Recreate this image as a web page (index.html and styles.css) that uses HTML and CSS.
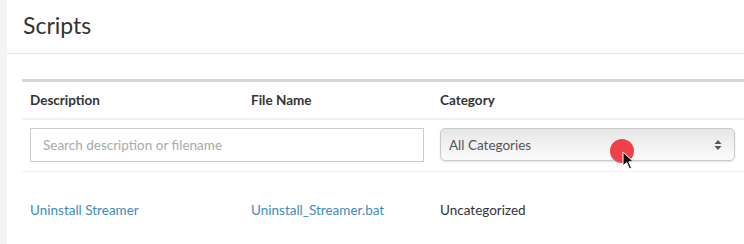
FILE: index.html
```html
<!DOCTYPE html>
<html lang="en">
<head>
    <meta charset="UTF-8">
    <meta name="viewport" content="width=device-width, initial-scale=1.0">
    <title>Scripts</title>
    <link rel="stylesheet" href="styles.css">
</head>
<body>
    <div class="panel">
        <div class="panel-header">
            <h1>Scripts</h1>
        </div>
        <div class="panel-body">
            <table class="scripts-table">
                <thead>
                    <tr class="head-row">
                        <th class="col-desc">Description</th>
                        <th class="col-file">File Name</th>
                        <th class="col-cat">Category</th>
                    </tr>
                    <tr class="filter-row">
                        <td colspan="2">
                            <input type="text" class="search" placeholder="Search description or filename">
                        </td>
                        <td>
                            <div class="select-wrap">
                                <span class="select-label">All Categories</span>
                                <svg class="select-arrows" width="8" height="12" viewBox="0 0 8 12">
                                    <path d="M4 1 L7.5 5 H0.5 Z" fill="#555"/>
                                    <path d="M4 11 L7.5 7 H0.5 Z" fill="#555"/>
                                </svg>
                            </div>
                        </td>
                    </tr>
                </thead>
                <tbody>
                    <tr class="data-row">
                        <td><a href="#">Uninstall Streamer</a></td>
                        <td><a href="#">Uninstall_Streamer.bat</a></td>
                        <td>Uncategorized</td>
                    </tr>
                </tbody>
            </table>
        </div>
    </div>

    <!-- click marker + mouse pointer from the recording -->
    <div class="click-dot"></div>
    <svg class="pointer" width="14" height="20" viewBox="0 0 14 20">
        <path d="M1 1 L1 15 L4.5 11.5 L7.5 18 L9.5 17 L6.8 10.8 L11.5 10.8 Z" fill="#111" stroke="#fff" stroke-width="1"/>
    </svg>
</body>
</html>
```

FILE: styles.css
```css
body {
    margin: 0;
    background-color: #f4f4f4;
    font-family: "Source Sans Pro", Lato, "Open Sans", sans-serif;
    color: #333;
    font-size: 13.5px;
    overflow: hidden;
}

.panel {
    margin-left: 7px;
    background-color: #fff;
    height: 244px;
}

.panel-header {
    height: 54px;
    border-bottom: 1px solid #e6e6e6;
    box-sizing: border-box;
    padding: 9px 16px 0;
}

h1 {
    margin: 0;
    font-size: 23px;
    font-weight: 400;
    color: #333;
    line-height: 32px;
}

.panel-body {
    padding: 25px 0 0 15px;
}

.scripts-table {
    width: 724px;
    border-collapse: collapse;
    border-top: 3px solid #d2d6de;
}

.scripts-table th,
.scripts-table td {
    text-align: left;
    padding: 0 8px;
}

.head-row th {
    height: 36px;
    font-weight: 700;
    font-size: 13.5px;
    border-bottom: 2px solid #f0f0f0;
}

.col-desc { width: 205px; }
.col-file { width: 173px; }

.filter-row td {
    height: 51px;
    border-bottom: 1px solid #f0f0f0;
}

.search {
    display: block;
    width: 394px;
    height: 34px;
    box-sizing: border-box;
    border: 1px solid #ccc;
    padding: 0 12px;
    font-family: inherit;
    font-size: 13.5px;
    margin-top: -2px;
}

.search::placeholder {
    color: #aaa;
}

.select-wrap {
    width: 295px;
    height: 33px;
    margin-top: -2px;
    box-sizing: border-box;
    border: 1px solid #c9c9c9;
    border-radius: 5px;
    background: linear-gradient(to bottom, #e7e7e7, #f3f3f3 60%, #fbfbfb);
    box-shadow: 0 1px 2px rgba(0, 0, 0, 0.12);
    display: flex;
    align-items: center;
    justify-content: space-between;
    padding: 0 12px 0 8px;
    color: #555;
}

.data-row td {
    height: 76px;
}

a {
    color: #3c8dbc;
    text-decoration: none;
}

.click-dot {
    position: absolute;
    left: 610px;
    top: 139px;
    width: 24px;
    height: 24px;
    border-radius: 50%;
    background-color: #f0404a;
}

.pointer {
    position: absolute;
    left: 622px;
    top: 151px;
}
```
